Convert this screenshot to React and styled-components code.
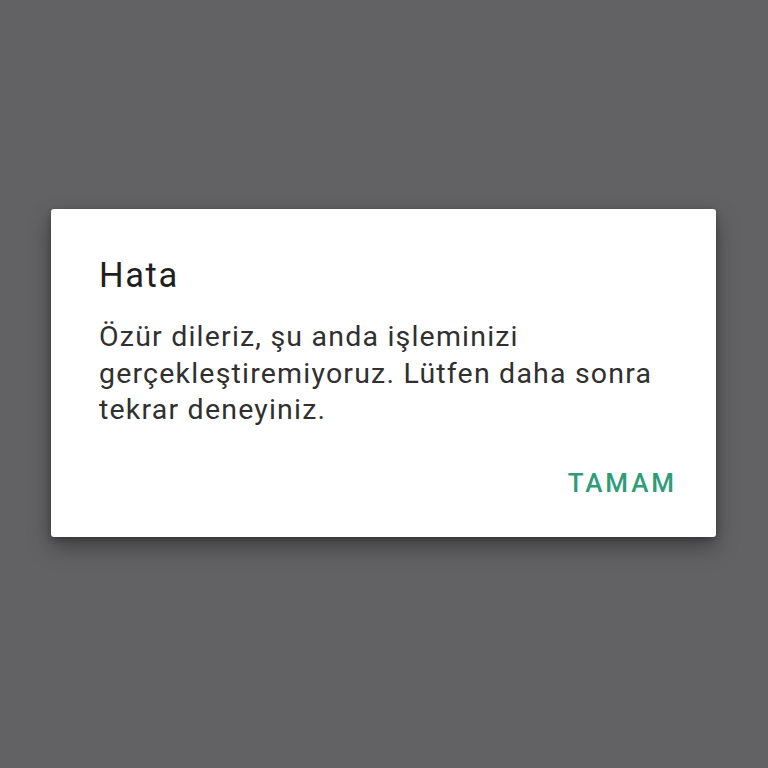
import React from "react";
import styled, { createGlobalStyle } from "styled-components";

const Global = createGlobalStyle`
  html, body { margin: 0; padding: 0; background: #626264; }
  body { font-family: Roboto, "Noto Sans", "Liberation Sans", sans-serif; }
`;

const Screen = styled.div`
  width: 768px;
  height: 768px;
  box-sizing: border-box;
  padding: 209px 52px 0 51px;
  background: #626264;
`;

const Dialog = styled.div`
  width: 665px;
  box-sizing: border-box;
  background: #ffffff;
  border-radius: 3px;
  padding: 46px 39px 39px 48px;
  box-shadow: 0 10px 22px rgba(0, 0, 0, 0.35), 0 2px 6px rgba(0, 0, 0, 0.25);
  display: flex;
  flex-direction: column;
`;

const Title = styled.h2`
  margin: 0;
  font-size: 34.5px;
  line-height: 40px;
  font-weight: 400;
  letter-spacing: 1.6px;
  color: #1f1f1f;
`;

const Message = styled.p`
  margin: 24px 0 0;
  font-size: 28.5px;
  line-height: 36.5px;
  font-weight: 400;
  letter-spacing: 1.2px;
  color: #303030;
`;

const Actions = styled.div`
  display: flex;
  justify-content: flex-end;
  margin-top: 39px;
`;

const TextButton = styled.button`
  border: none;
  background: transparent;
  padding: 0;
  font-family: inherit;
  font-size: 26px;
  line-height: 30px;
  font-weight: 500;
  letter-spacing: 2.9px;
  color: #2e9c78;
  cursor: pointer;
`;

export default function App() {
  return (
    <>
      <Global />
      <Screen>
        <Dialog>
          <Title>Hata</Title>
          <Message>
            Özür dileriz, şu anda işleminizi gerçekleştiremiyoruz. Lütfen daha sonra tekrar deneyiniz.
          </Message>
          <Actions>
            <TextButton>TAMAM</TextButton>
          </Actions>
        </Dialog>
      </Screen>
    </>
  );
}
